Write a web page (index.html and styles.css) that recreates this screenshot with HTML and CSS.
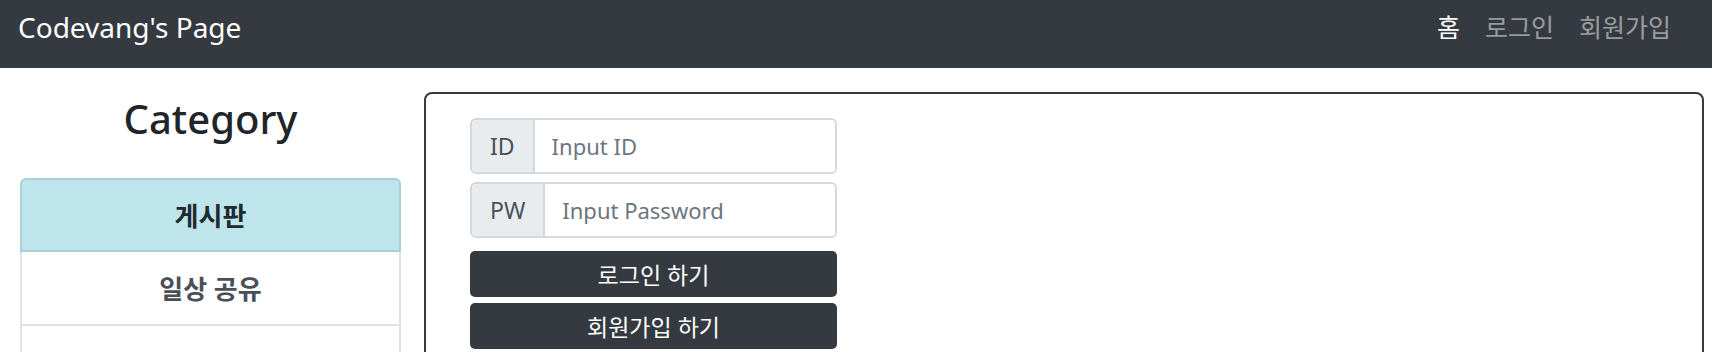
FILE: index.html
```html
<!DOCTYPE html>
<html lang="ko">

<head>
    <meta charset="UTF-8">
    <meta name="viewport" content="width=device-width, initial-scale=1.0">
    <title>Codevang's Page</title>
    <link rel="stylesheet" href="styles.css">
</head>

<body>
    <nav class="navbar">
        <a class="brand" href="#">Codevang's Page</a>
        <div class="nav-links">
            <a class="nav-link active" href="#">홈</a>
            <a class="nav-link" href="#">로그인</a>
            <a class="nav-link" href="#">회원가입</a>
        </div>
    </nav>
    <div class="main">
        <div class="side">
            <h1 class="side-title">Category</h1>
            <div class="list-group">
                <a class="list-item active" href="#">게시판</a>
                <a class="list-item" href="#">일상 공유</a>
                <a class="list-item" href="#">&nbsp;</a>
            </div>
        </div>
        <div class="content">
            <form class="login-form">
                <div class="input-group">
                    <span class="addon">ID</span>
                    <input class="form-control" type="text" placeholder="Input ID">
                </div>
                <div class="input-group">
                    <span class="addon">PW</span>
                    <input class="form-control" type="password" placeholder="Input Password">
                </div>
                <button class="btn btn-login" type="button">로그인 하기</button>
                <button class="btn btn-join" type="button">회원가입 하기</button>
            </form>
        </div>
    </div>
</body>

</html>
```

FILE: styles.css
```css
* {
    margin: 0;
    padding: 0;
    box-sizing: border-box;
}

body {
    font-family: "Noto Sans", "Noto Sans CJK KR", sans-serif;
    color: #212529;
    background-color: #fff;
    overflow: hidden;
}

a {
    text-decoration: none;
}

/* 상단 네비게이션 */
.navbar {
    height: 68px;
    background-color: #343a40;
    display: flex;
    align-items: flex-start;
    justify-content: space-between;
    padding: 8px 41px 0 18px;
}

.navbar .brand {
    color: #fff;
    font-size: 28px;
    line-height: 38px;
}

.nav-links {
    display: flex;
    gap: 25px;
}

.nav-links .nav-link {
    color: rgba(255, 255, 255, 0.5);
    font-size: 25px;
    line-height: 38px;
}

.nav-links .nav-link.active {
    color: #fff;
}

/* 본문 */
.main {
    display: flex;
    padding: 24px 8px 0 20px;
}

.side {
    width: 381px;
    flex-shrink: 0;
}

.side-title {
    font-size: 40px;
    font-weight: 500;
    line-height: 48px;
    text-align: center;
    margin-top: 3px;
    margin-bottom: 35px;
}

.list-group {
    display: flex;
    flex-direction: column;
}

.list-item {
    height: 74px;
    display: flex;
    align-items: center;
    justify-content: center;
    font-size: 26px;
    font-weight: 700;
    color: #495057;
    border: 2px solid #e3e3e3;
    border-top: none;
}

.list-item.active {
    background-color: #bee5eb;
    border: 2px solid #a9d0d8;
    border-radius: 6px 6px 0 0;
    color: #1d2a2e;
}

.content {
    flex: 1;
    margin-left: 23px;
    height: 400px;
    border: 2px solid #343a40;
    border-radius: 8px;
    padding: 24px 44px;
}

.login-form {
    width: 367px;
    display: flex;
    flex-direction: column;
}

.input-group {
    display: flex;
    height: 56px;
    border: 2px solid #d4d8dd;
    border-radius: 6px;
    overflow: hidden;
    margin-bottom: 8px;
}

.input-group .addon {
    display: flex;
    align-items: center;
    padding: 0 18px;
    background-color: #e9ecef;
    border-right: 2px solid #d4d8dd;
    color: #495057;
    font-size: 23px;
}

.input-group .form-control {
    flex: 1;
    min-width: 0;
    border: none;
    outline: none;
    padding: 0 17px;
    font-family: "Noto Sans", "Noto Sans CJK KR", sans-serif;
    font-size: 22px;
    color: #495057;
}

.input-group .form-control::placeholder {
    color: #6c757d;
}

.btn {
    height: 46px;
    border: none;
    border-radius: 5px;
    background-color: #343a40;
    color: #fff;
    font-family: "Noto Sans", "Noto Sans CJK KR", sans-serif;
    font-size: 23px;
    cursor: pointer;
}

.btn-login {
    margin-top: 5px;
}

.btn-join {
    margin-top: 6px;
}
```
